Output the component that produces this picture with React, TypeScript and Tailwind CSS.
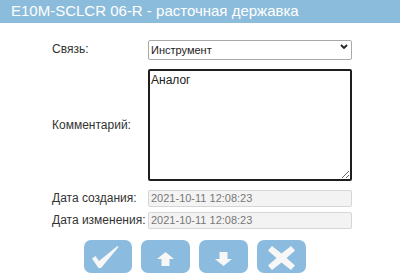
import React from 'react';

function CheckIcon() {
  return (
    <svg width="28" height="24" viewBox="0 0 28 24">
      <path d="M0 12.5 L3.5 10 L7 15 L25.5 0 L26.5 1 L9 22 L6.5 22 Z" fill="#f7f7f7" />
    </svg>
  );
}

function ArrowUpIcon() {
  return (
    <svg width="17" height="14" viewBox="0 0 17 14">
      <path d="M8.5 0 L17 7 L12.5 7 L12.5 14 L4.5 14 L4.5 7 L0 7 Z" fill="#f7f7f7" />
    </svg>
  );
}

function ArrowDownIcon() {
  return (
    <svg width="17" height="14" viewBox="0 0 17 14">
      <path d="M4.5 0 L12.5 0 L12.5 7 L17 7 L8.5 14 L0 7 L4.5 7 Z" fill="#f7f7f7" />
    </svg>
  );
}

function CrossIcon() {
  return (
    <svg width="27" height="24" viewBox="0 0 27 24">
      <path d="M4 0 L13.5 7.5 L23 0 L27 4.5 L18.5 12 L27 19.5 L23 24 L13.5 16.5 L4 24 L0 19.5 L8.5 12 L0 4.5 Z" fill="#f7f7f7" />
    </svg>
  );
}

export default function App() {
  const label = 'text-[12px] text-[#333] pl-[2px]';
  const dateInput =
    'h-[17px] w-[204px] border border-[#d6d6d6] bg-[#f3f3f3] px-[2px] text-[11px] text-[#777] rounded-[2px] outline-none';

  return (
    <div className="w-[400px] h-[274px] bg-white overflow-hidden" style={{ fontFamily: '"Liberation Sans", Arial, sans-serif' }}>
      <div className="h-[23px] bg-[#8bbcdc] pl-[11px] flex items-center text-[15px] text-white">
        E10M-SCLCR 06-R - расточная державка
      </div>

      <div className="w-[300px] ml-[50px] mt-[14px] grid grid-cols-[98px_204px] items-center">
        <div className={label}>Связь:</div>
        <div className="relative">
          <select
            defaultValue="Инструмент"
            className="appearance-none h-[20px] w-[204px] border border-[#a9a9a9] rounded-[2px] bg-white pl-[2px] text-[11px] text-[#222] outline-none"
          >
            <option>Инструмент</option>
          </select>
          <svg className="absolute right-[4px] top-[7px]" width="8" height="6" viewBox="0 0 8 6">
            <path d="M1 1 L4 4 L7 1" stroke="#222" strokeWidth="1.8" fill="none" />
          </svg>
        </div>

        <div className={`${label} mt-[8px]`}>Комментарий:</div>
        <textarea
          defaultValue="Аналог"
          className="mt-[8px] h-[112px] w-[204px] border-2 border-[#1e1e1e] rounded-[2px] px-[1px] py-0 text-[12px] text-[#222] outline-none"
        />

        <div className={`${label} mt-[8px]`}>Дата создания:</div>
        <input readOnly value="2021-10-11 12:08:23" className={`${dateInput} mt-[8px]`} />

        <div className={`${label} mt-[4px]`}>Дата изменения:</div>
        <input readOnly value="2021-10-11 12:08:23" className={`${dateInput} mt-[4px]`} />
      </div>

      <div className="flex gap-[9px] pl-[84px] mt-[11px]">
        <button className="w-[48px] h-[33px] rounded-[7px] bg-[#8bbcdf] flex items-center justify-center pt-[3px] pr-[4px]">
          <CheckIcon />
        </button>
        <button className="w-[49px] h-[33px] rounded-[7px] bg-[#8bbcdf] flex items-center justify-center pt-[4px]">
          <ArrowUpIcon />
        </button>
        <button className="w-[49px] h-[33px] rounded-[7px] bg-[#8bbcdf] flex items-center justify-center pt-[4px]">
          <ArrowDownIcon />
        </button>
        <button className="w-[49px] h-[33px] rounded-[7px] bg-[#8bbcdf] flex items-center justify-center pt-[2px]">
          <CrossIcon />
        </button>
      </div>
    </div>
  );
}
